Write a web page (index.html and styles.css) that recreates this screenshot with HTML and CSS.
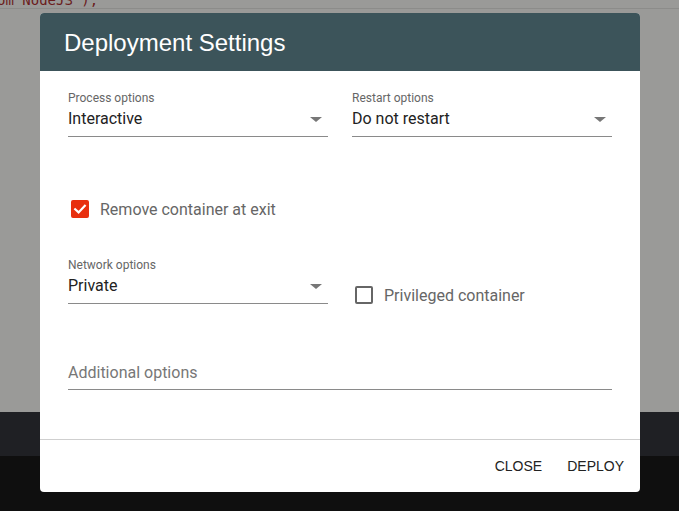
FILE: index.html
```html
<!DOCTYPE html>
<html>
<head>
<meta charset="utf-8">
<link rel="stylesheet" href="styles.css">
</head>
<body>
<div class="backdrop">
  <div class="code-line"><span class="code">om NodeJS');</span></div>
  <div class="editor-gray"></div>
  <div class="bar-dark"></div>
  <div class="bar-black"></div>
</div>
<div class="dialog">
  <div class="dialog-header">Deployment Settings</div>
  <div class="dialog-body">
    <div class="row row-first">
      <div class="select">
        <div class="select-label">Process options</div>
        <div class="select-value"><span>Interactive</span><span class="caret"></span></div>
      </div>
      <div class="select">
        <div class="select-label">Restart options</div>
        <div class="select-value"><span>Do not restart</span><span class="caret"></span></div>
      </div>
    </div>
    <div class="check-row">
      <span class="box checked">
        <svg viewBox="0 0 18 18" width="18" height="18"><path d="M4.2 9.2 L7.6 12.4 L13.8 5.8" fill="none" stroke="#fff" stroke-width="2.2" stroke-linecap="square"/></svg>
      </span>
      <span class="check-text">Remove container at exit</span>
    </div>
    <div class="row row-net">
      <div class="select">
        <div class="select-label">Network options</div>
        <div class="select-value"><span>Private</span><span class="caret"></span></div>
      </div>
      <div class="check-row check-priv">
        <span class="box"></span>
        <span class="check-text">Privileged container</span>
      </div>
    </div>
    <div class="text-field">Additional options</div>
  </div>
  <div class="dialog-actions">
    <span class="btn">CLOSE</span>
    <span class="btn">DEPLOY</span>
  </div>
</div>
</body>
</html>
```
FILE: styles.css
```css
html, body {
  margin: 0;
  padding: 0;
}
body {
  width: 679px;
  height: 511px;
  overflow: hidden;
  font-family: Roboto, "Liberation Sans", sans-serif;
  position: relative;
}
.backdrop {
  display: flex;
  flex-direction: column;
  height: 511px;
}
.code-line {
  height: 8px;
  background: #9a9a98;
  border-bottom: 1px solid #8c8c8a;
  position: relative;
  overflow: hidden;
}
.code {
  position: absolute;
  left: -3px;
  top: -8px;
  font-family: "DejaVu Sans Mono", monospace;
  font-size: 14px;
  line-height: 16px;
  color: #6a1c1c;
}
.editor-gray {
  height: 403px;
  background: #9a9a98;
}
.bar-dark {
  height: 44px;
  background: #1f2024;
}
.bar-black {
  flex: 1;
  background: #0f0f0f;
}
.dialog {
  position: absolute;
  left: 40px;
  top: 13px;
  width: 600px;
  height: 479px;
  background: #fff;
  border-radius: 4px;
  overflow: hidden;
  display: flex;
  flex-direction: column;
}
.dialog-header {
  height: 58px;
  background: #3c545a;
  color: #fff;
  font-family: "Liberation Sans", Arial, sans-serif;
  font-size: 24px;
  padding-left: 24px;
  display: flex;
  align-items: center;
  padding-top: 1px;
  box-sizing: border-box;
}
.dialog-body {
  flex: 1;
  padding: 0 28px;
  border-bottom: 1px solid #cfcfcf;
}
.row {
  display: flex;
  gap: 24px;
}
.row-first {
  margin-top: 20px;
}
.select {
  width: 260px;
  border-bottom: 1px solid #8a8a8a;
  box-sizing: border-box;
}
.select-label {
  font-size: 12px;
  color: #666;
  line-height: 14px;
}
.select-value {
  display: flex;
  justify-content: space-between;
  align-items: center;
  font-size: 16px;
  color: #222;
  line-height: 22px;
  height: 22px;
  padding: 3px 0 6px;
}
.caret {
  width: 0;
  height: 0;
  border-left: 6px solid transparent;
  border-right: 6px solid transparent;
  border-top: 5px solid #777;
  margin-right: 6px;
}
.check-row {
  display: flex;
  align-items: center;
  margin-top: 63px;
  margin-left: 3px;
  height: 18px;
}
.box {
  width: 18px;
  height: 18px;
  box-sizing: border-box;
  border: 2px solid #666;
  border-radius: 2px;
  display: inline-block;
  flex: none;
}
.box.checked {
  background: #e8300f;
  border-color: #e8300f;
}
.box.checked svg {
  display: block;
  margin: -2px;
}
.check-text {
  margin-left: 11px;
  font-size: 16px;
  color: #666;
}
.row-net {
  margin-top: 40px;
}
.check-priv {
  margin-top: 28px;
  margin-left: 3px;
}
.text-field {
  margin-top: 60px;
  font-size: 16px;
  color: #777;
  height: 26px;
  border-bottom: 1px solid #8a8a8a;
  box-sizing: border-box;
  line-height: 18px;
}
.dialog-actions {
  height: 52px;
  display: flex;
  justify-content: flex-end;
  align-items: center;
  padding-right: 16px;
  gap: 25px;
}
.btn {
  font-family: "Liberation Sans", Arial, sans-serif;
  font-size: 14px;
  color: #222;
}
```
